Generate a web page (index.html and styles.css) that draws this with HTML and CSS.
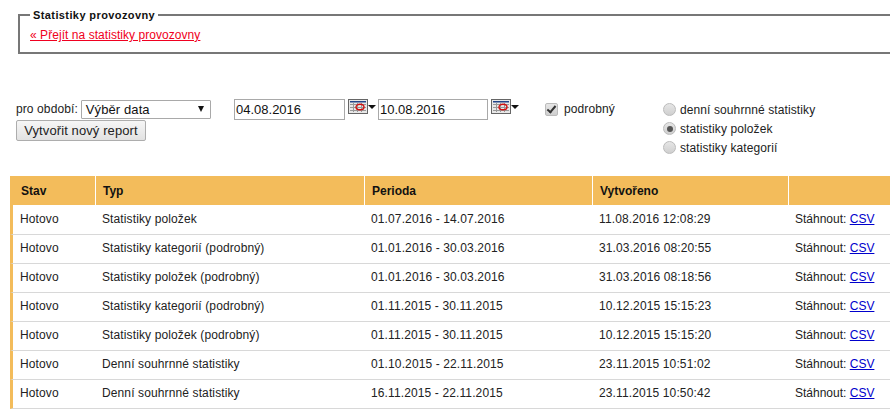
FILE: index.html
```html
<!DOCTYPE html>
<html lang="cs">
<head>
<meta charset="utf-8">
<title>Statistiky provozovny</title>
<link rel="stylesheet" href="styles.css">
</head>
<body>
<fieldset class="box">
  <legend class="box-title">Statistiky provozovny</legend>
  <a class="back" href="#">« Přejít na statistiky provozovny</a>
</fieldset>
<form class="filter">
  <div class="period">
    <div class="period-row">
      <label class="period-label">pro období:</label>
      <div class="select"><span>Výběr data</span><i class="caret"></i></div>
    </div>
    <button type="button" class="btn">Vytvořit nový report</button>
  </div>
  <div class="dates">
    <input class="date" type="text" value="04.08.2016">
    <span class="cal"><svg width="20" height="15" viewBox="0 0 20 15"><rect x=".5" y=".5" width="19" height="14" fill="#e8e8e8" stroke="#666"/><rect x="2" y="2" width="16" height="1.500" fill="#224488"/><path d="M2 5.500h16M2 8.500h16M2 11.500h16M5.500 4v9M9.500 4v9M13.500 4v9" stroke="#999" fill="none"/><ellipse cx="12" cy="8" rx="4" ry="2.800" fill="none" stroke="#d01010" stroke-width="1.400"/></svg><i class="cal-caret"></i></span>
    <input class="date date-to" type="text" value="10.08.2016">
    <span class="cal"><svg width="20" height="15" viewBox="0 0 20 15"><rect x=".5" y=".5" width="19" height="14" fill="#e8e8e8" stroke="#666"/><rect x="2" y="2" width="16" height="1.500" fill="#224488"/><path d="M2 5.500h16M2 8.500h16M2 11.500h16M5.500 4v9M9.500 4v9M13.500 4v9" stroke="#999" fill="none"/><ellipse cx="12" cy="8" rx="4" ry="2.800" fill="none" stroke="#d01010" stroke-width="1.400"/></svg><i class="cal-caret"></i></span>
  </div>
  <label class="detail"><input class="check" type="checkbox" checked><span>podrobný</span></label>
  <div class="kinds">
    <label class="kind"><input class="radio" type="radio" name="k"><span>denní souhrnné statistiky</span></label>
    <label class="kind"><input class="radio" type="radio" name="k" checked><span>statistiky položek</span></label>
    <label class="kind"><input class="radio" type="radio" name="k"><span>statistiky kategorií</span></label>
  </div>
</form>
<table class="reports">
  <colgroup><col class="c1"><col class="c2"><col class="c3"><col class="c4"><col class="c5"></colgroup>
  <thead><tr><th>Stav</th><th>Typ</th><th>Perioda</th><th>Vytvořeno</th><th></th></tr></thead>
  <tbody>
    <tr><td>Hotovo</td><td>Statistiky položek</td><td>01.07.2016 - 14.07.2016</td><td>11.08.2016 12:08:29</td><td>Stáhnout: <a href="#">CSV</a></td></tr>
    <tr><td>Hotovo</td><td>Statistiky kategorií (podrobný)</td><td>01.01.2016 - 30.03.2016</td><td>31.03.2016 08:20:55</td><td>Stáhnout: <a href="#">CSV</a></td></tr>
    <tr><td>Hotovo</td><td>Statistiky položek (podrobný)</td><td>01.01.2016 - 30.03.2016</td><td>31.03.2016 08:18:56</td><td>Stáhnout: <a href="#">CSV</a></td></tr>
    <tr><td>Hotovo</td><td>Statistiky kategorií (podrobný)</td><td>01.11.2015 - 30.11.2015</td><td>10.12.2015 15:15:23</td><td>Stáhnout: <a href="#">CSV</a></td></tr>
    <tr><td>Hotovo</td><td>Statistiky položek (podrobný)</td><td>01.11.2015 - 30.11.2015</td><td>10.12.2015 15:15:20</td><td>Stáhnout: <a href="#">CSV</a></td></tr>
    <tr><td>Hotovo</td><td>Denní souhrnné statistiky</td><td>01.10.2015 - 22.11.2015</td><td>23.11.2015 10:51:02</td><td>Stáhnout: <a href="#">CSV</a></td></tr>
    <tr><td>Hotovo</td><td>Denní souhrnné statistiky</td><td>16.11.2015 - 22.11.2015</td><td>23.11.2015 10:50:42</td><td>Stáhnout: <a href="#">CSV</a></td></tr>
  </tbody>
</table>
</body>
</html>
```
FILE: styles.css
```css
html, body { margin: 0; padding: 0; height: 414px; overflow: hidden; background: #fff; }
body { font: 12px "Liberation Sans", Arial, sans-serif; color: #222; letter-spacing: .1px; }
.box { box-sizing: border-box; width: 900px; height: 46px; margin: 8px 0 0 18px; padding: 6px 0 0 10px; border: 2px solid #777; border-width: 2px 0 2px 2px; min-width: 0; }
.box-title { padding: 1px 3px 0; font-weight: bold; font-size: 11px; color: #111; letter-spacing: .4px; line-height: 13px; }
.back { color: #f00020; font-size: 12px; letter-spacing: .05px; }
.filter { display: flex; align-items: flex-start; margin-top: 45px; height: 77px; }
.period { width: 218px; padding-left: 16px; flex: none; }
.period-row { display: flex; align-items: center; gap: 3px; height: 20px; }
.select { box-sizing: border-box; width: 130px; height: 19px; border: 1px solid #a9a9a9; border-radius: 1px; padding-left: 4px; display: flex; align-items: center; justify-content: space-between; font-size: 13px; line-height: 17px; background: #fff; color: #111; }
.caret { width: 0; height: 0; border: 3px solid transparent; border-top: 6px solid #111; border-bottom: 0; margin-right: 6px; }
.btn { display: block; box-sizing: border-box; width: 130px; height: 21px; margin-top: 1px; padding: 0; border: 1px solid #adadad; border-radius: 2px; background: linear-gradient(#f6f6f6, #e2e2e2); font: 13px "Liberation Sans", Arial, sans-serif; letter-spacing: .1px; color: #222; }
.dates { display: flex; align-items: flex-start; flex: none; width: 311px; }
.date { box-sizing: border-box; width: 111px; height: 21px; margin: 0; padding: 0 1px; border: 1px solid #a9a9a9; font: 13px "Liberation Sans", Arial, sans-serif; color: #111; }
.date-to { width: 110px; }
.cal { display: flex; width: 33px; padding: 0 0 0 3px; box-sizing: border-box; align-items: flex-start; }
.cal svg { display: block; flex: none; }
.cal-caret { width: 0; height: 0; border: 4px solid transparent; border-top: 4px solid #111; border-bottom: 0; margin: 6px 0 0 0; }
.detail { display: flex; width: 118px; flex: none; align-items: center; gap: 6px; height: 20px; color: #222; }
.check { appearance: none; box-sizing: border-box; position: relative; width: 13px; height: 13px; margin: 0; flex: none; border: 1px solid #bbb; border-radius: 2px; background: linear-gradient(#e6e6e6, #cfcfcf); }
.check::before { content: ""; position: absolute; left: 3px; top: 0; width: 3px; height: 7px; border: solid #333; border-width: 0 2px 2px 0; transform: rotate(40deg); }
.kinds { display: flex; flex-direction: column; margin-top: 1px; }
.kind { display: flex; align-items: center; gap: 4px; height: 19px; color: #222; }
.radio { appearance: none; box-sizing: border-box; position: relative; width: 13px; height: 13px; margin: 0; flex: none; border: 1px solid #bbb; border-radius: 50%; background: linear-gradient(#e6e6e6, #cfcfcf); }
.radio:checked::before { content: ""; position: absolute; left: 2.500px; top: 2.500px; width: 6px; height: 6px; border-radius: 50%; background: #555; }
.reports { border-collapse: separate; border-spacing: 0; table-layout: fixed; width: 880px; margin-left: 10px; }
.c1 { width: 86px; } .c2 { width: 269px; } .c3 { width: 228px; } .c4 { width: 196px; } .c5 { width: 101px; }
.reports th { height: 29px; padding: 0 0 0 7px; background: #f3bc5b; border-right: 1px solid #fff; text-align: left; font-size: 12px; font-weight: bold; color: #111; box-sizing: border-box; letter-spacing: 0; }
.reports th:first-child { padding-left: 11px; }
.reports th:last-child { border-right: 0; }
.reports td { height: 29px; box-sizing: border-box; padding: 0 0 3px 6px; border-bottom: 1px solid #d8d8d8; color: #222; white-space: nowrap; letter-spacing: .12px; }
.reports tbody tr:first-child td { height: 30px; padding-bottom: 2px; }
.reports td:first-child { padding-left: 7px; border-left: 3px solid #f3bc5b; }
.reports td:last-child { letter-spacing: 0; }
.reports a { color: #00c; }
```
